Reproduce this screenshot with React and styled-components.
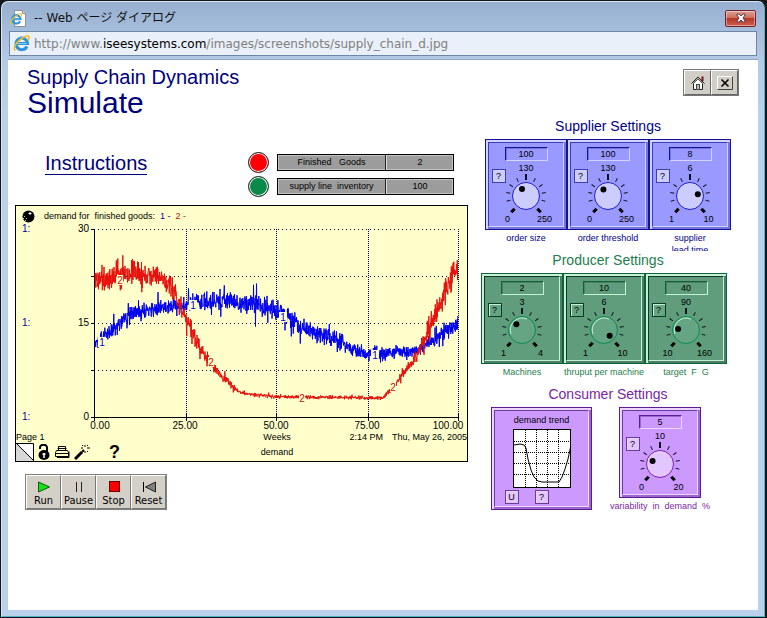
import * as React from "react";
import styled, { createGlobalStyle, ThemeProvider } from "styled-components";

const themes = {
  supplier: {
    ink: "#00008b",
    outline: "#14149a",
    base: "#9999ff",
    light: "#d3d3ff",
    band: "#7474dd",
    shade: "#3c3cb4",
    knob: "#ccccff",
    ring: "#1a1ac8",
  },
  producer: {
    ink: "#1c7d4c",
    outline: "#0f6238",
    base: "#5f9d7c",
    light: "#c4f2d6",
    band: "#4e7f66",
    shade: "#0c3a22",
    knob: "#66a584",
    ring: "#0a8a50",
  },
  consumer: {
    ink: "#7a1fa5",
    outline: "#5f1c92",
    base: "#cc99ff",
    light: "#ecd6ff",
    band: "#9c66cf",
    shade: "#6a3a9c",
    knob: "#e3c6ff",
    ring: "#7d1cb4",
  },
};

const supplierDials = [
  { id: "order-size", label: "order size", value: 100, min: 0, mid: 130, max: 250, angle: -30 },
  { id: "order-threshold", label: "order threshold", value: 100, min: 0, mid: 130, max: 250, angle: -35 },
  { id: "lead-time", label: "supplier\nlead time", value: 8, min: 1, mid: 6, max: 10, angle: 78 },
];

const producerDials = [
  { id: "machines", label: "Machines", value: 2, min: 1, mid: 3, max: 4, angle: -45 },
  { id: "thruput", label: "thruput per machine", value: 10, min: 1, mid: 6, max: 10, angle: 135 },
  { id: "target", label: "target  F  G", value: 40, min: 10, mid: 90, max: 160, angle: -82 },
];

const variabilityDial = {
  id: "variability",
  label: "variability  in  demand  %",
  value: 5,
  min: 0,
  mid: 10,
  max: 20,
  angle: -68,
};

// [x, y, noise] knots in plot pixels
const inventoryKnots = [
  [79, 121, 8], [97, 108, 8], [114, 93, 9], [131, 89, 8], [147, 85, 8], [164, 83, 8],
  [181, 80, 10], [197, 79, 10], [214, 79, 9], [231, 81, 11], [247, 86, 12], [264, 90, 10],
  [287, 107, 10], [304, 113, 9], [321, 118, 10], [337, 128, 8], [350, 131, 7], [364, 132, 7],
  [381, 130, 6], [401, 128, 6], [421, 116, 8], [442, 101, 9],
];

const goodsKnots = [
  [79, 57, 12], [91, 57, 14], [114, 51, 14], [131, 54, 14], [149, 56, 13], [157, 68, 12],
  [169, 93, 9], [179, 117, 9], [191, 138, 6], [207, 155, 5], [224, 171, 2], [244, 173, 2],
  [264, 175, 2], [300, 175, 2], [367, 176, 2], [381, 160, 4], [401, 133, 6], [417, 98, 12],
  [427, 74, 12], [436, 54, 13], [442, 47, 14],
];

const noisyPath = (knots, seed) => {
  let state = seed;
  const random = () => {
    state = (state * 16807) % 2147483647;
    return state / 2147483647;
  };
  const points = [];
  for (let i = 0; i < knots.length - 1; i++) {
    const [x1, y1, n1] = knots[i];
    const [x2, y2, n2] = knots[i + 1];
    for (let x = x1; x < x2; x += 0.25) {
      const t = (x - x1) / (x2 - x1);
      const noise = n1 + (n2 - n1) * t;
      // an occasional reading swings well outside the usual band
      const spike = random() > 0.9 ? 1.6 : 0.9;
      const offset = (random() + random() + random() - 1.5) * noise * spike;
      points.push(`${x.toFixed(1)} ${(y1 + (y2 - y1) * t + offset).toFixed(1)}`);
    }
  }
  return "M" + points.join("L");
};

const App = () => (
  <>
    <GlobalStyle />
    <Dialog>
      <TitleBar>
        <ExplorerIcon page />
        <WindowTitle>-- Web ページ ダイアログ</WindowTitle>
        <CloseButton type="button" aria-label="Close window">
          <svg width="12" height="10" viewBox="0 0 12 10">
            <path d="M2 1h2l2 2 2-2h2v1L8 5l2 3v1H8L6 7 4 9H2V8l2-3-2-3z" fill="#fff" stroke="#5b3a40" />
          </svg>
        </CloseButton>
      </TitleBar>
      <AddressBar>
        <ExplorerIcon />
        <Address>
          http://www.<b>iseesystems.com</b>/images/screenshots/supply_chain_d.jpg
        </Address>
      </AddressBar>
      <Page>
        <Header>
          <div>
            <Subtitle>Supply Chain Dynamics</Subtitle>
            <Title>Simulate</Title>
          </div>
          <Toolbar>
            <ToolButton type="button" aria-label="Home">
              <HomeIcon />
            </ToolButton>
            <ToolButton type="button" aria-label="Exit">
              <ExitIcon />
            </ToolButton>
          </Toolbar>
        </Header>
        <Columns>
          <Main>
            <Summary>
              <InstructionsLink href="#instructions">Instructions</InstructionsLink>
              <Gauges>
                <Gauge color="#fb0007" label="Finished   Goods" value="2" />
                <Gauge color="#0a8a48" label="supply line  inventory" value="100" />
              </Gauges>
            </Summary>
            <DemandGraph />
            <RunControls />
          </Main>
          <Settings>
            <DialSection theme={themes.supplier} title="Supplier Settings" dials={supplierDials} align="flex-end" />
            <DialSection theme={themes.producer} title="Producer Settings" dials={producerDials} align="flex-start" />
            <ThemeProvider theme={themes.consumer}>
              <section>
                <SectionTitle>Consumer Settings</SectionTitle>
                <ConsumerRow>
                  <TrendPanel />
                  <Dial {...variabilityDial} />
                </ConsumerRow>
              </section>
            </ThemeProvider>
          </Settings>
        </Columns>
      </Page>
    </Dialog>
  </>
);

const Gauge = ({ color, label, value }) => (
  <GaugeRow>
    <Lamp $color={color} />
    <GaugeBox>
      <GaugeLabel>{label}</GaugeLabel>
      <GaugeValue>{value}</GaugeValue>
    </GaugeBox>
  </GaugeRow>
);

const DialSection = ({ theme, title, dials, align }) => (
  <ThemeProvider theme={theme}>
    <section>
      <SectionTitle>{title}</SectionTitle>
      <DialRow $align={align}>
        {dials.map((dial) => (
          <Dial key={dial.id} {...dial} />
        ))}
      </DialRow>
    </section>
  </ThemeProvider>
);

const Dial = ({ id, label, value, min, mid, max, angle }) => (
  <DialItem>
    <Panel>
      <PanelFace>
        <DialValue id={id} type="text" defaultValue={value} />
        <DialBody>
          <HelpButton type="button">?</HelpButton>
          <MidLabel>{mid}</MidLabel>
          <Knob angle={angle} />
        </DialBody>
        <DialRange>
          <span>{min}</span>
          <span>{max}</span>
        </DialRange>
      </PanelFace>
    </Panel>
    <DialLabel htmlFor={id}>{label}</DialLabel>
  </DialItem>
);

const Knob = ({ angle }) => {
  const rad = ((angle - 90) * Math.PI) / 180;
  return (
    <KnobSvg width="41" height="40" viewBox="-20 -22 41 40" aria-hidden="true">
      {[-105, -80, -55, -28, 28, 55, 80, 105].map((a) => (
        <line key={a} y1="-16" y2="-20" transform={`rotate(${a})`} stroke="#10101c" />
      ))}
      <line y1="-16" y2="-22" stroke="#10101c" strokeWidth="2" />
      {[-138, 138].map((a) => (
        <line key={a} y1="-17" y2="-22" transform={`rotate(${a})`} stroke="#000" strokeWidth="3" />
      ))}
      <KnobFace r="13.5" />
      <KnobGlint d="M-11 4A12 12 0 0 1 5 -11" />
      <circle cx={8 * Math.cos(rad)} cy={8 * Math.sin(rad)} r="3" />
    </KnobSvg>
  );
};

const TrendPanel = () => (
  <WidePanel>
    <PanelFace>
      <TrendTitle>demand trend</TrendTitle>
      <svg width="58" height="59" viewBox="0 0 58 59">
        <rect x="0.5" y="0.5" width="57" height="58" fill="#fff" stroke="#000" />
        <path
          d="M12.5 1v57M23.5 1v57M34.5 1v57M45.5 1v57M1 12.5h56M1 23.5h56M1 34.5h56M1 45.5h56"
          stroke="#000"
          strokeDasharray="1 1"
        />
        <path d="M1 16l6-1 4 1 2 3 2 11 3 11 3 7 4 4 4 1h17l3-5 3-8 3-10 3-14" fill="none" stroke="#000" />
      </svg>
      <TrendButtons>
        <SmallButton type="button">U</SmallButton>
        <SmallButton type="button">?</SmallButton>
      </TrendButtons>
    </PanelFace>
  </WidePanel>
);

const DemandGraph = () => (
  <GraphCard>
    <GraphHeader>
      <svg width="13" height="13" viewBox="0 0 13 13">
        <circle cx="6.5" cy="6.5" r="6" />
        <path d="M8 2v3M6.5 3.5h3" stroke="#fff" />
        <path d="M1 9l1-1M3 11l1-1M2 6l1 1M4 8l1 1" stroke="#ccc" />
      </svg>
      <GraphTitle>
        demand for  finished goods:  <SeriesKey $color="#0000b4">1 -  </SeriesKey>
        <SeriesKey $color="#b41414">2 -</SeriesKey>
      </GraphTitle>
    </GraphHeader>
    <Plot viewBox="0 0 451 210">
      <path
        d="M78 7.5H442M78 54.5H442M78 101.5H442M78 148.5H442"
        stroke="#000"
        strokeDasharray="1 3"
      />
      <path d="M170.5 7V195M260.5 7V195M352.5 7V195M442.5 7V195" stroke="#000" strokeDasharray="1 1" />
      <path
        d="M78.5 7V195.5H443M75 7.5h3M75 54.5h3M75 101.5h3M75 148.5h3M75 195.5h3M78.5 195v4M170.5 192v7M260.5 192v7M352.5 192v7M442.5 192v7"
        fill="none"
        stroke="#000"
      />
      <path d={noisyPath(inventoryKnots, 4711)} fill="none" stroke="#0000f2" />
      <path d={noisyPath(goodsKnots, 1234)} fill="none" stroke="#e6100c" />
      {[[86, 120], [177, 83], [267, 95], [359, 133]].map(([x, y]) => (
        <g key={x}>
          <rect x={x - 4} y={y - 5} width="8" height="10" fill="#ffffcc" />
          <SeriesMark x={x} y={y + 4} fill="#0000c8">1</SeriesMark>
        </g>
      ))}
      {[[104, 58], [195, 140], [286, 176], [377, 165]].map(([x, y]) => (
        <g key={x}>
          <rect x={x - 3} y={y - 5} width="6" height="10" fill="#ffffcc" />
          <SeriesMark x={x} y={y + 4} fill="#c01010">2</SeriesMark>
        </g>
      ))}
      {[10, 104, 198].map((y) => (
        <AxisText key={y} x="6" y={y} fill="#0000a0">1:</AxisText>
      ))}
      <AxisText x="73" y="10" textAnchor="end">30</AxisText>
      <AxisText x="73" y="104" textAnchor="end">15</AxisText>
      <AxisText x="73" y="198" textAnchor="end">0</AxisText>
      <AxisText x="84" y="207" textAnchor="middle">0.00</AxisText>
      <AxisText x="169" y="207" textAnchor="middle">25.00</AxisText>
      <AxisText x="260" y="207" textAnchor="middle">50.00</AxisText>
      <AxisText x="351" y="207" textAnchor="middle">75.00</AxisText>
      <AxisText x="432" y="207" textAnchor="middle">100.00</AxisText>
    </Plot>
    <GraphFooter>
      <span>Page 1</span>
      <Centered>Weeks</Centered>
      <Timestamp>
        <span>2:14 PM</span>
        <span>Thu, May 26, 2005</span>
      </Timestamp>
    </GraphFooter>
    <GraphFooter>
      <GraphTools>
        <svg width="18" height="18" viewBox="0 0 18 18">
          <path d="M0 0h18v18z" fill="#fff" />
          <path d="M0 0v18h18z" fill="#d8d8d8" />
          <path d="M0 .5h17.5V18M0 0l18 18" fill="none" stroke="#000" />
        </svg>
        <svg width="12" height="16" viewBox="0 0 12 16">
          <path d="M2 5V3.5a3.5 2.8 0 0 1 7 0V8" fill="none" stroke="#000" strokeWidth="2" />
          <ellipse cx="6" cy="11" rx="5.5" ry="5" />
          <path d="M6 9v5M4.5 10h3" stroke="#fff" strokeWidth="1.5" />
        </svg>
        <svg width="16" height="14" viewBox="0 0 16 14">
          <path
            d="M4.5 5.5v-4h7v4M3.5 3.5h9M2.5 5.5h11l1 2v4h-13v-4zM1.5 8.5h13M3 12.5h12v-6"
            fill="none"
            stroke="#000"
          />
        </svg>
        <svg width="17" height="16" viewBox="0 0 17 16">
          <path d="M1 15l7-7" stroke="#000" strokeWidth="3" />
          <path d="M8 8l2-2" stroke="#000" strokeWidth="2" />
          <path d="M11 1v2M11 7v2M7 4h2M13 4h3M8 1l1 1M14 1l-1 1M13 7l1 1" stroke="#000" />
        </svg>
        <GraphHelp type="button">?</GraphHelp>
      </GraphTools>
      <Centered>demand</Centered>
    </GraphFooter>
  </GraphCard>
);

const RunControls = () => (
  <Controls>
    <ControlButton type="button">
      <svg width="14" height="12" viewBox="0 0 14 12">
        <path d="M1.5 1v10l11-5z" fill="#16e016" stroke="#0a5a0a" />
      </svg>
      Run
    </ControlButton>
    <ControlButton type="button">
      <svg width="14" height="12" viewBox="0 0 14 12">
        <path d="M4.5 1v10M9.5 1v10" stroke="#222" />
      </svg>
      Pause
    </ControlButton>
    <ControlButton type="button">
      <svg width="14" height="12" viewBox="0 0 14 12">
        <rect x="2.5" y="0.5" width="10" height="10" fill="#fa0000" stroke="#6a0000" />
      </svg>
      Stop
    </ControlButton>
    <ControlButton type="button">
      <svg width="14" height="12" viewBox="0 0 14 12">
        <path d="M1.5 1v10" stroke="#000" />
        <path d="M13.5 1v10l-10-5z" fill="#808080" stroke="#222" />
      </svg>
      Reset
    </ControlButton>
  </Controls>
);

const ExplorerIcon = ({ page }) => (
  <svg width="17" height="17" viewBox="0 0 17 17" aria-hidden="true">
    {page && <path d="M4.5.5h8l3 3v13h-11z" fill="#fff" stroke="#8b8f96" />}
    {page && <path d="M12.5.5v3h3" fill="#ddd" stroke="#8b8f96" />}
    <g transform={page ? "translate(0 3) scale(.72)" : undefined}>
      <path d="M14 11.5a5.8 5.8 0 1 1 .6-3H4" fill="none" stroke="#2f93d8" strokeWidth="3" />
      <path d="M4 8.5h10" stroke="#7ccbf4" strokeWidth="1" />
      <path
        d="M2.5 15.5C-1 14 3 7.5 8 4s8.5-4 8-1c-.2 1-.6 1.5-1.2 2.3"
        fill="none"
        stroke="#f2bd22"
        strokeWidth="1.6"
      />
    </g>
  </svg>
);

const HomeIcon = () => (
  <svg width="16" height="16" viewBox="0 0 16 16">
    <path d="M3.5 8v6.5h9V8L8 4z" fill="#fff" stroke="#222" />
    <path d="M1.5 8.5L8 2l6.5 6.5" fill="none" stroke="#222" />
    <path d="M3 9L8 4l5 5" fill="none" stroke="#555" />
    <path d="M12.5 6V1.5" stroke="#7a1010" strokeWidth="2" />
    <rect x="6.5" y="9.5" width="3" height="5" fill="#bbb" stroke="#444" />
  </svg>
);

const ExitIcon = () => (
  <svg width="16" height="14" viewBox="0 0 16 14">
    <path d="M.5 13.5V.5h15" fill="none" stroke="#fff" />
    <path d="M.5 13.5h15V.5" fill="none" stroke="#444" />
    <path d="M4.5 3.5l7 7M11.5 3.5l-7 7" stroke="#000" strokeWidth="1.6" />
  </svg>
);

const GlobalStyle = createGlobalStyle`
  *, *::before, *::after {
    box-sizing: border-box;
  }

  body {
    margin: 0;
    background: #15161a;
    font-family: "Liberation Sans", Arial, sans-serif;
    font-size: 9px;
    line-height: 11px;
    color: #000;
  }

  svg {
    display: block;
    flex: none;
  }

  button, input {
    font: inherit;
    color: inherit;
    padding: 0;
  }
`;

const Dialog = styled.div`
  display: flex;
  flex-direction: column;
  min-height: calc(100vh - 2px);
  margin: 1px 2px 1px 1px;
  padding: 0 6px 6px;
  border: 1px solid #d7e6f7;
  border-right-color: #4fb4c8;
  border-bottom-color: #4fb4c8;
  border-radius: 7px 7px 0 0;
  background: linear-gradient(#97b0d0, #b5cae6 60px, #b9d1ea 110px);
`;

const TitleBar = styled.div`
  display: flex;
  align-items: center;
  height: 29px;
  padding: 3px 2px 0;
`;

const WindowTitle = styled.div`
  flex: 1;
  margin-left: 7px;
  font-family: "DejaVu Sans", "Noto Sans CJK JP", sans-serif;
  font-size: 12px;
  line-height: 18px;
  color: #111;
`;

const CloseButton = styled.button`
  display: flex;
  align-items: center;
  justify-content: center;
  width: 31px;
  height: 17px;
  border: 1px solid #6b2430;
  border-radius: 2px;
  background: linear-gradient(#dda096, #cf6a5c 48%, #b5352a 50%, #d0604e);
  box-shadow: inset 0 0 0 1px rgba(255, 255, 255, 0.4);
`;

const AddressBar = styled.div`
  display: flex;
  align-items: center;
  height: 25px;
  margin: 0 1px 3px;
  padding-left: 3px;
  border: 1px solid #6d87a8;
  background: #e9f0f9;
`;

const Address = styled.div`
  margin-left: 4px;
  font-family: "DejaVu Sans", sans-serif;
  font-size: 12px;
  line-height: 18px;
  color: #808080;

  b {
    font-weight: 400;
    color: #000;
  }
`;

const Page = styled.main`
  flex: 1;
  border-top: 1px solid #8fa6c4;
  background: #fff;
`;

const Header = styled.header`
  display: flex;
  justify-content: space-between;
  align-items: flex-start;
  padding: 5px 19px 0;
  color: #00007c;
`;

const Subtitle = styled.p`
  margin: 0;
  font-size: 20px;
  line-height: 24px;
`;

const Title = styled.h1`
  margin: 0;
  font-size: 30px;
  line-height: 28px;
  font-weight: 400;
`;

const Toolbar = styled.div`
  display: flex;
  margin-top: 4px;
  border: 1px solid #777;
`;

const ToolButton = styled.button`
  display: flex;
  align-items: center;
  justify-content: center;
  width: 27px;
  height: 25px;
  border: 1px solid;
  border-color: #fff #666 #666 #fff;
  background: #d0cec6;
`;

const Columns = styled.div`
  display: flex;
  gap: 13px;
  padding: 0 27px 20px 7px;
`;

const Main = styled.div`
  flex: 1;
  min-width: 0;
  max-width: 453px;
`;

const Summary = styled.div`
  display: flex;
  justify-content: space-between;
  align-items: flex-start;
  padding: 35px 14px 8px 30px;
`;

const InstructionsLink = styled.a`
  border-bottom: 1px solid #00007c;
  font-size: 20px;
  line-height: 22px;
  color: #00007c;
  text-decoration: none;
`;

const Gauges = styled.div`
  display: grid;
  gap: 3px;
`;

const GaugeRow = styled.div`
  display: flex;
  align-items: center;
  gap: 8px;
`;

const Lamp = styled.span`
  width: 21px;
  height: 21px;
  border: 1px solid #222;
  border-radius: 50%;
  background: ${(p) => p.$color};
  box-shadow: inset 0 0 0 1px #fff;
`;

const GaugeBox = styled.div`
  display: flex;
  width: 177px;
  border: 1px solid #000;
  background: #9c9c9c;
  box-shadow: inset 0 0 0 1px #c4c4c4;
  line-height: 15px;
  text-align: center;
  white-space: pre;
`;

const GaugeLabel = styled.span`
  flex: 0 0 108px;
  border-right: 1px solid #222;
`;

const GaugeValue = styled.span`
  flex: 1;
  border-left: 1px solid #ddd;
`;

const GraphCard = styled.section`
  border: 1px solid #000;
  background: #ffffcc;
`;

const GraphHeader = styled.div`
  display: flex;
  align-items: center;
  gap: 9px;
  height: 16px;
  padding: 4px 6px 0;
`;

const GraphTitle = styled.h2`
  margin: 0;
  font-size: 9px;
  line-height: 11px;
  font-weight: 400;
  white-space: pre;
`;

const SeriesKey = styled.span`
  color: ${(p) => p.$color};
`;

const Plot = styled.svg`
  width: 100%;
  height: auto;
`;

const AxisText = styled.text`
  font-size: 10px;
`;

const SeriesMark = styled.text`
  font-size: 10px;
  text-anchor: middle;
`;

const GraphFooter = styled.div`
  display: grid;
  grid-template-columns: 229px 64px 1fr;
  align-items: center;
`;

const Centered = styled.span`
  text-align: center;
`;

const Timestamp = styled.span`
  display: flex;
  justify-content: flex-end;
  gap: 9px;
  white-space: nowrap;
`;

const GraphTools = styled.div`
  display: flex;
  align-items: center;
  gap: 4px;
`;

const GraphHelp = styled.button`
  margin-left: 14px;
  border: 0;
  background: none;
  font-size: 18px;
  line-height: 18px;
  font-weight: 700;
`;

const Controls = styled.div`
  display: inline-flex;
  margin: 12px 10px 0;
  border: 1px solid #808080;
`;

const ControlButton = styled.button`
  display: flex;
  flex-direction: column;
  align-items: center;
  justify-content: flex-end;
  gap: 1px;
  width: 35px;
  height: 34px;
  border: 1px solid;
  border-color: #fff #777 #777 #fff;
  background: #d4d0c8;
  font-family: "DejaVu Sans Condensed", "DejaVu Sans", sans-serif;
  font-size: 11px;
  line-height: 14px;
`;

const Settings = styled.div`
  flex: 0 0 250px;
`;

const SectionTitle = styled.h2`
  margin: 0;
  padding: 0 0 4px 4px;
  font-size: 14px;
  line-height: 18px;
  font-weight: 400;
  text-align: center;
  color: ${(p) => p.theme.ink};
`;

const DialRow = styled.div`
  display: flex;
  justify-content: ${(p) => p.$align};
  height: 112px;
  overflow: hidden;
`;

const ConsumerRow = styled.div`
  display: flex;
  align-items: flex-start;
  gap: 27px;
  padding-left: 10px;
`;

const DialItem = styled.div`
  width: 82px;
`;

const Panel = styled.div`
  height: 91px;
  padding: 2px;
  border: 1px solid ${(p) => p.theme.outline};
  background: ${(p) => p.theme.base};
  box-shadow:
    inset 2px 2px ${(p) => p.theme.light},
    inset -2px -2px ${(p) => p.theme.band};
`;

const WidePanel = styled(Panel)`
  width: 101px;
  height: 103px;
`;

const PanelFace = styled.div`
  display: flex;
  flex-direction: column;
  align-items: center;
  height: 100%;
  padding-top: 4px;
  border: 1px solid;
  border-color: ${(p) => `${p.theme.shade} ${p.theme.light} ${p.theme.light} ${p.theme.shade}`};
`;

const DialValue = styled.input`
  width: 43px;
  height: 14px;
  border: 1px solid;
  border-color: ${(p) => `${p.theme.outline} ${p.theme.light} ${p.theme.light} ${p.theme.outline}`};
  background: transparent;
  text-align: center;
  box-shadow: inset 1px 1px ${(p) => p.theme.band};
`;

const DialBody = styled.div`
  display: grid;
  grid-template-columns: 14px 41px 14px;
  grid-template-rows: 13px 40px;
`;

const MidLabel = styled.span`
  grid-column: 2;
  line-height: 14px;
  text-align: center;
`;

const SmallButton = styled.button`
  width: 14px;
  height: 14px;
  border: 1px solid;
  border-color: ${(p) => `${p.theme.light} ${p.theme.outline} ${p.theme.outline} ${p.theme.light}`};
  background: ${(p) => p.theme.knob};
  outline: 1px solid ${(p) => p.theme.shade};
  outline-offset: -1px;
  box-shadow: inset 1px 1px ${(p) => p.theme.light};
  line-height: 12px;
`;

const HelpButton = styled(SmallButton)`
  grid-column: 1;
  grid-row: 1 / 3;
  margin-top: 8px;
`;

const KnobSvg = styled.svg`
  grid-column: 2;
`;

const KnobFace = styled.circle`
  fill: ${(p) => p.theme.knob};
  stroke: ${(p) => p.theme.ring};
`;

const KnobGlint = styled.path`
  fill: none;
  stroke: ${(p) => p.theme.light};
`;

const DialRange = styled.div`
  display: grid;
  grid-template-columns: 37px 37px;
  text-align: center;
  line-height: 10px;
`;

const DialLabel = styled.label`
  display: flex;
  justify-content: center;
  margin: 2px -10px 0;
  line-height: 12px;
  text-align: center;
  white-space: pre;
  color: ${(p) => p.theme.ink};
`;

const TrendTitle = styled.h3`
  margin: 0 0 3px;
  font-size: 9px;
  line-height: 11px;
  font-weight: 400;
`;

const TrendButtons = styled.div`
  display: flex;
  gap: 16px;
  margin-top: 2px;
  padding-right: 30px;
`;

export default App;
